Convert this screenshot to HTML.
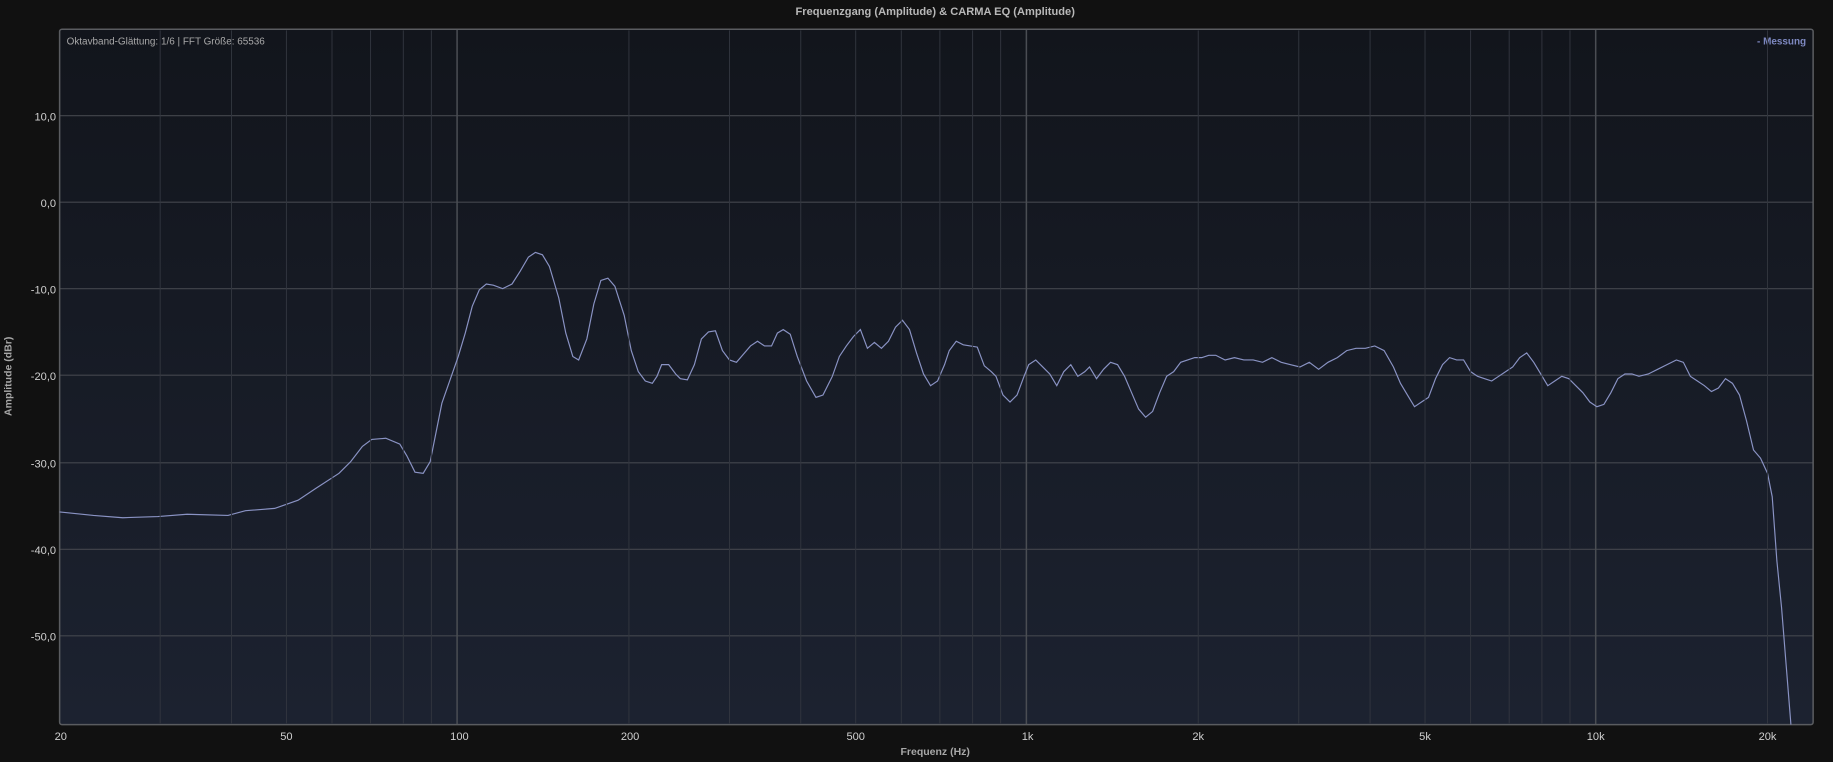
<!DOCTYPE html>
<html><head><meta charset="utf-8"><style>
html,body{margin:0;padding:0;background:#111111;width:1833px;height:762px;overflow:hidden}
svg{display:block}
text{font-family:"Liberation Sans",Arial,sans-serif}
</style></head><body>
<svg width="1833" height="762" viewBox="0 0 1568 652" preserveAspectRatio="none">
<defs><linearGradient id="bg" x1="0" y1="0" x2="0" y2="1"><stop offset="0" stop-color="#12151c"/><stop offset="1" stop-color="#1c2230"/></linearGradient></defs>
<rect x="51" y="25" width="1500" height="595" rx="2" fill="url(#bg)"/>
<g stroke="#3a3f48" stroke-width="0.8" id="minor"></g>
<g stroke="#43464d" stroke-width="1">
<line x1="51" x2="1551" y1="99" y2="99"/><line x1="51" x2="1551" y1="173" y2="173"/><line x1="51" x2="1551" y1="247" y2="247"/><line x1="51" x2="1551" y1="321" y2="321"/><line x1="51" x2="1551" y1="396" y2="396"/><line x1="51" x2="1551" y1="470" y2="470"/><line x1="51" x2="1551" y1="544" y2="544"/>
</g>
<g stroke="#4a4d53" stroke-width="1.3"><line x1="391" x2="391" y1="25" y2="620"/><line x1="878" x2="878" y1="25" y2="620"/><line x1="1365" x2="1365" y1="25" y2="620"/></g>
<rect x="51" y="25" width="1500" height="595" rx="2" fill="none" stroke="#5a5c60" stroke-width="1.3"/>
<polyline fill="none" stroke="#8a93c4" stroke-width="1" points="51,438 80,441 105,443 135,442 160,440 195,441 210,437 235,435 255,428 270,418 290,405 300,395 310,382 318,376 330,375 342,380 348,390 355,404 362,405 368,395 372,375 378,345 385,325 392,305 398,285 404,262 410,248 416,243 422,244 430,247 438,243 445,232 452,220 458,216 464,218 470,228 478,255 484,285 490,305 495,308 502,290 508,260 514,240 520,238 526,245 534,270 540,300 546,318 552,326 558,328 562,322 566,312 572,312 578,320 582,324 588,325 594,312 600,290 606,284 612,283 618,300 624,308 630,310 636,303 642,296 648,292 654,296 660,296 665,285 670,282 676,286 682,305 690,326 698,340 704,338 712,322 718,305 724,296 730,288 736,282 742,298 748,293 754,298 760,292 766,280 772,274 778,282 784,302 790,320 796,330 802,326 808,312 812,300 818,292 824,295 830,296 836,297 842,313 848,318 852,322 858,338 864,344 870,338 876,322 880,312 886,308 892,314 898,320 904,330 910,318 916,312 922,322 928,318 932,314 938,324 944,316 950,310 956,312 962,322 968,336 974,350 980,357 986,352 992,336 998,322 1004,318 1010,310 1016,308 1022,306 1028,306 1034,304 1040,304 1048,308 1056,306 1064,308 1072,308 1080,310 1088,306 1096,310 1104,312 1112,314 1120,310 1128,316 1136,310 1144,306 1152,300 1160,298 1168,298 1176,296 1184,300 1192,314 1198,328 1204,338 1210,348 1216,344 1222,340 1228,324 1234,312 1240,306 1246,308 1252,308 1258,318 1264,322 1270,324 1276,326 1282,322 1288,318 1294,314 1300,306 1306,302 1312,310 1318,320 1324,330 1330,326 1336,322 1342,324 1348,330 1354,336 1360,344 1366,348 1372,346 1378,336 1384,324 1390,320 1396,320 1402,322 1410,320 1418,316 1426,312 1434,308 1440,310 1446,322 1452,326 1458,330 1464,335 1470,332 1476,324 1482,328 1488,338 1494,360 1500,385 1506,392 1512,405 1516,425 1520,480 1524,520 1528,570 1532,620"/>
<text x="800" y="13" font-size="9.5" font-weight="bold" fill="#b8b8b8" text-anchor="middle">Frequenzgang (Amplitude) &amp; CARMA EQ (Amplitude)</text>
<text x="57" y="38" font-size="8.5" fill="#a8a8a8">Oktavband-Glättung: 1/6 | FFT Größe: 65536</text>
<text x="1545" y="38" font-size="8.5" font-weight="bold" fill="#7d88c0" text-anchor="end">- Messung</text>
<g font-size="9.5" fill="#d0d0d0" text-anchor="end">
<text x="48" y="103">10,0</text><text x="48" y="177">0,0</text><text x="48" y="251">-10,0</text><text x="48" y="325">-20,0</text><text x="48" y="400">-30,0</text><text x="48" y="474">-40,0</text><text x="48" y="548">-50,0</text>
</g>
<g font-size="9.5" fill="#d0d0d0" text-anchor="middle">
<text x="52" y="633">20</text><text x="245" y="633">50</text><text x="393" y="633">100</text><text x="539" y="633">200</text><text x="732" y="633">500</text><text x="879" y="633">1k</text><text x="1025" y="633">2k</text><text x="1219" y="633">5k</text><text x="1365" y="633">10k</text><text x="1512" y="633">20k</text>
</g>
<text x="800" y="646" font-size="9" font-weight="bold" fill="#a8a8a8" text-anchor="middle">Frequenz (Hz)</text>
<text transform="translate(10,322) rotate(-90)" font-size="9" font-weight="bold" fill="#a8a8a8" text-anchor="middle">Amplitude (dBr)</text>
<g stroke="#32363f" stroke-width="0.8">
<line x1="137" x2="137" y1="26" y2="619"/><line x1="198" x2="198" y1="26" y2="619"/><line x1="245" x2="245" y1="26" y2="619"/><line x1="284" x2="284" y1="26" y2="619"/><line x1="317" x2="317" y1="26" y2="619"/><line x1="345" x2="345" y1="26" y2="619"/><line x1="369" x2="369" y1="26" y2="619"/>
<line x1="538" x2="538" y1="26" y2="619"/><line x1="624" x2="624" y1="26" y2="619"/><line x1="685" x2="685" y1="26" y2="619"/><line x1="732" x2="732" y1="26" y2="619"/><line x1="771" x2="771" y1="26" y2="619"/><line x1="804" x2="804" y1="26" y2="619"/><line x1="832" x2="832" y1="26" y2="619"/><line x1="856" x2="856" y1="26" y2="619"/>
<line x1="1025" x2="1025" y1="26" y2="619"/><line x1="1111" x2="1111" y1="26" y2="619"/><line x1="1172" x2="1172" y1="26" y2="619"/><line x1="1219" x2="1219" y1="26" y2="619"/><line x1="1258" x2="1258" y1="26" y2="619"/><line x1="1291" x2="1291" y1="26" y2="619"/><line x1="1319" x2="1319" y1="26" y2="619"/><line x1="1343" x2="1343" y1="26" y2="619"/>
<line x1="1512" x2="1512" y1="26" y2="619"/>
</g>
</svg>
</body></html>
